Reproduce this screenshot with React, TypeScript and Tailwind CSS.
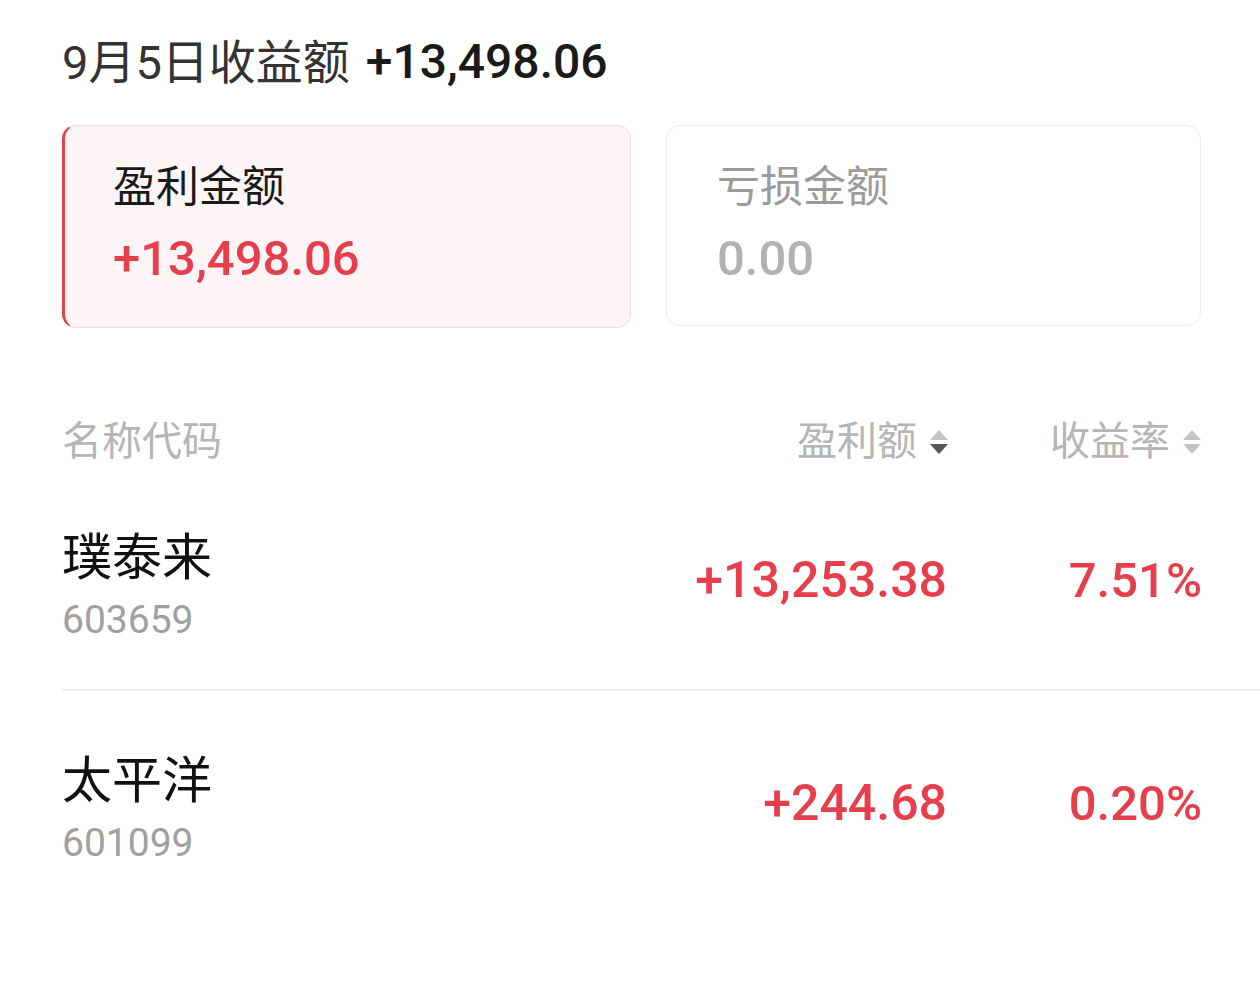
const font = { fontFamily: 'Roboto, "Noto Sans CJK SC", sans-serif' };

const SortIcon = ({ down }: { down?: boolean }) => (
  <svg width="20" height="26" viewBox="0 0 20 26" className="ml-[12px]">
    <path d="M1 11 L10 1 L19 11 Z" fill="#c4c4c4" />
    <path d="M1 15 L19 15 L10 25 Z" fill={down ? "#555555" : "#c4c4c4"} />
  </svg>
);

const rows = [
  { name: "璞泰来", code: "603659", amount: "+13,253.38", rate: "7.51%", h: "h-[208px] border-b-2 border-[#efefef]" },
  { name: "太平洋", code: "601099", amount: "+244.68", rate: "0.20%", h: "h-[236px]" },
];

export default function App() {
  return (
    <div className="w-[1260px] min-h-[1000px] bg-white overflow-hidden" style={font}>
      <div className="pl-[62px] pr-[58px]">
        <div className="pt-[36px] flex items-center h-[88px]">
          <span className="text-[47px] leading-none text-[#333333]">9月5日收益额</span>
          <span className="ml-[16px] text-[48px] leading-none font-medium text-[#1a1a1a]">+13,498.06</span>
        </div>

        <div className="mt-[37px] flex gap-[35px]">
          <div className="w-[569px] h-[203px] rounded-[14px] border border-[#f8dadf] border-l-[3px] border-l-[#e53e4c] bg-[#fdf4f6] pl-[48px] pt-[36px]">
            <div className="text-[43px] leading-[50px] text-[#1a1a1a]">盈利金额</div>
            <div className="mt-[22px] text-[49px] leading-[50px] font-medium text-[#e63e4c]">+13,498.06</div>
          </div>
          <div className="w-[535px] h-[201px] rounded-[14px] border border-[#ececec] bg-white pl-[50px] pt-[36px]">
            <div className="text-[43px] leading-[50px] text-[#9b9b9b]">亏损金额</div>
            <div className="mt-[22px] text-[49px] leading-[50px] font-medium text-[#b2b2b2]">0.00</div>
          </div>
        </div>

        <div className="mt-[90px] flex items-center h-[48px] text-[40px] leading-none text-[#b5b5b5]">
          <div className="flex-1">名称代码</div>
          <div className="flex items-center">
            盈利额
            <SortIcon down />
          </div>
          <div className="w-[253px] flex items-center justify-end">
            收益率
            <SortIcon />
          </div>
        </div>

        <div className="mt-[17px] mr-[-58px]">
          {rows.map((r) => (
            <div key={r.code} className={"flex items-center pr-[58px] " + r.h}>
              <div className="flex-1 flex flex-col">
                <span className="text-[50px] leading-[56px] text-[#111111]">{r.name}</span>
                <span className="mt-[12px] text-[39px] leading-[44px] text-[#a0a0a0]">{r.code}</span>
              </div>
              <div className="mb-[12px] mr-[2px] text-[50px] leading-none font-medium text-[#e63e4c] text-right">{r.amount}</div>
              <div className="mb-[12px] w-[253px] text-[49px] leading-none font-medium text-[#e63e4c] text-right">{r.rate}</div>
            </div>
          ))}
        </div>
      </div>
    </div>
  );
}
